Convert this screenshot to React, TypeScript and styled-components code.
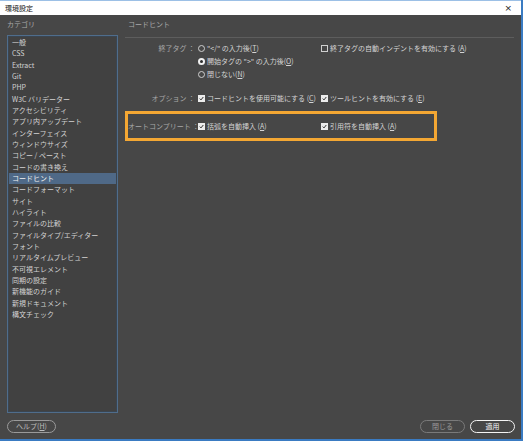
import React from "react";
import styled, {createGlobalStyle, css} from "styled-components";

const GlobalStyle = createGlobalStyle`
  html, body {
    margin: 0;
    padding: 0;
    background: #474747;
  }
  body {
    font-family: "Noto Sans CJK JP", "Noto Sans", sans-serif;
  }
`

const StyledWindow = styled.div`
  width: 523px;
  height: 441px;
  box-sizing: border-box;
  display: flex;
  flex-direction: column;
  background: #474747;
  border-right: 2px solid #3a7bc2;
  border-bottom: 2px solid #3a7bc2;
  overflow: hidden;
`

const StyledTitleBar = styled.div`
  height: 15px;
  flex-shrink: 0;
  box-sizing: border-box;
  background: #ffffff;
  border-top: 1px solid #9cc0e6;
  display: flex;
  align-items: center;
  justify-content: space-between;
  padding: 0 9px 0 5px;
  font-size: 7px;
  color: #111;
`

const StyledClose = styled.span`
  font-family: "DejaVu Sans", sans-serif;
  font-size: 9px;
  line-height: 1;
  color: #222;
`

const StyledBody = styled.div`
  flex: 1;
  display: grid;
  grid-template-columns: 111px 1fr;
  column-gap: 7px;
  padding: 3px 6px 0 7px;
`

const StyledSidebar = styled.div`
  display: flex;
  flex-direction: column;
`

const StyledSectionLabel = styled.div<{ $indent?: number }>`
  height: 12px;
  line-height: 12px;
  font-size: 7px;
  color: #a9a9a9;
  padding-left: ${props => props.$indent ?? 0}px;
`

const StyledList = styled.ul`
  list-style: none;
  margin: 5px 0 0;
  padding: 1px 1px;
  height: 378px;
  box-sizing: border-box;
  background: #414141;
  border: 1px solid #4f6d8c;
  box-shadow: inset 0 0 0 1px #3b4550;
`

const StyledListItem = styled.li<{ $selected?: boolean }>`
  height: 11.33px;
  line-height: 11.33px;
  padding-left: 3px;
  font-size: 7px;
  color: #d2d2d2;
  white-space: nowrap;
  ${props => props.$selected && css`
    background: #4f6987;
    color: #f2f2f2;
  `}
`

const StyledContent = styled.div`
  display: flex;
  flex-direction: column;
`

const StyledDivider = styled.div`
  height: 1px;
  margin-top: 7px;
  margin-right: 1px;
  background: #5d5d5d;
`

const StyledGroup = styled.div<{ $top: number }>`
  display: grid;
  grid-template-columns: 73px 123px 1fr;
  grid-auto-rows: 13px;
  align-items: center;
  margin-top: ${props => props.$top}px;
`

const StyledHighlight = styled.div`
  margin-top: 6.5px;
  width: 312px;
  height: 30px;
  box-sizing: border-box;
  border: 3px solid #f4a733;
  display: grid;
  grid-template-columns: 70px 123px 1fr;
  align-items: center;
`

const StyledLabel = styled.div`
  text-align: right;
  padding-right: 3px;
  font-size: 7px;
  color: #a8a8a8;
  white-space: nowrap;
`

const StyledOption = styled.label`
  display: flex;
  align-items: center;
  gap: 2px;
  font-size: 7px;
  color: #d4d4d4;
  white-space: nowrap;
`

const StyledRadio = styled.span<{ $checked?: boolean }>`
  width: 7px;
  height: 7px;
  box-sizing: border-box;
  border-radius: 50%;
  border: 1px solid #cfcfcf;
  ${props => props.$checked && css`
    border: 2px solid #f2f2f2;
    background: #2e2e2e;
  `}
`

const StyledBox = styled.span<{ $checked?: boolean }>`
  width: 7px;
  height: 7px;
  box-sizing: border-box;
  border: 1px solid #cfcfcf;
  display: flex;
  align-items: center;
  justify-content: center;
  ${props => props.$checked && css`
    background: #ececec;
    border-color: #ececec;
  `}
`

const StyledKey = styled.span`
  text-decoration: underline;
`

const StyledFooter = styled.div`
  height: 26px;
  flex-shrink: 0;
  display: flex;
  align-items: center;
  justify-content: space-between;
  padding: 0 6px 0 7px;
`

const StyledButtonRow = styled.div`
  display: flex;
  gap: 5px;
`

const StyledButton = styled.button<{ $width: number, $variant?: "default" | "muted" | "primary" }>`
  width: ${props => props.$width}px;
  height: 13px;
  box-sizing: border-box;
  padding: 0;
  border-radius: 7px;
  background: transparent;
  font-family: inherit;
  font-size: 7px;
  line-height: 1;
  border: 1px solid #9a9a9a;
  color: #bdbdbd;
  ${props => props.$variant === "muted" && css`
    border-color: #7a7a7a;
    color: #9a9a9a;
  `}
  ${props => props.$variant === "primary" && css`
    border: 1.5px solid #f4f4f4;
    color: #f4f4f4;
  `}
`

const Check = () => (
  <svg width="5" height="5" viewBox="0 0 10 10">
    <path d="M1.5 5.2 L4 7.8 L8.6 2" fill="none" stroke="#333" strokeWidth="2"/>
  </svg>
)

const Radio: React.FC<{ checked?: boolean, children: React.ReactNode }> = ({checked, children}) => (
  <StyledOption>
    <StyledRadio $checked={checked}/>
    <span>{children}</span>
  </StyledOption>
)

const Checkbox: React.FC<{ checked?: boolean, children: React.ReactNode }> = ({checked, children}) => (
  <StyledOption>
    <StyledBox $checked={checked}>{checked && <Check/>}</StyledBox>
    <span>{children}</span>
  </StyledOption>
)

const categories = [
  "一般", "CSS", "Extract", "Git", "PHP", "W3C バリデーター", "アクセシビリティ",
  "アプリ内アップデート", "インターフェイス", "ウィンドウサイズ", "コピー / ペースト",
  "コードの書き換え", "コードヒント", "コードフォーマット", "サイト", "ハイライト",
  "ファイルの比較", "ファイルタイプ/エディター", "フォント", "リアルタイムプレビュー",
  "不可視エレメント", "同期の設定", "新機能のガイド", "新規ドキュメント", "構文チェック",
]

const App: React.FC = () => {
  return (
    <>
      <GlobalStyle/>
      <StyledWindow>
        <StyledTitleBar>
          <span>環境設定</span>
          <StyledClose>×</StyledClose>
        </StyledTitleBar>
        <StyledBody>
          <StyledSidebar>
            <StyledSectionLabel>カテゴリ</StyledSectionLabel>
            <StyledList>
              {categories.map(name => (
                <StyledListItem key={name} $selected={name === "コードヒント"}>{name}</StyledListItem>
              ))}
            </StyledList>
          </StyledSidebar>
          <StyledContent>
            <StyledSectionLabel $indent={3}>コードヒント</StyledSectionLabel>
            <StyledDivider/>
            <StyledGroup $top={3.5}>
              <StyledLabel>終了タグ ：</StyledLabel>
              <Radio>"&lt;/" の入力後(<StyledKey>T</StyledKey>)</Radio>
              <Checkbox>終了タグの自動インデントを有効にする (<StyledKey>A</StyledKey>)</Checkbox>
              <span/>
              <Radio checked>開始タグの "&gt;" の入力後(<StyledKey>O</StyledKey>)</Radio>
              <span/>
              <span/>
              <Radio>閉じない(<StyledKey>N</StyledKey>)</Radio>
              <span/>
            </StyledGroup>
            <StyledGroup $top={11}>
              <StyledLabel>オプション ：</StyledLabel>
              <Checkbox checked>コードヒントを使用可能にする (<StyledKey>C</StyledKey>)</Checkbox>
              <Checkbox checked>ツールヒントを有効にする (<StyledKey>E</StyledKey>)</Checkbox>
            </StyledGroup>
            <StyledHighlight>
              <StyledLabel>オートコンプリート ：</StyledLabel>
              <Checkbox checked>括弧を自動挿入 (<StyledKey>A</StyledKey>)</Checkbox>
              <Checkbox checked>引用符を自動挿入 (<StyledKey>A</StyledKey>)</Checkbox>
            </StyledHighlight>
          </StyledContent>
        </StyledBody>
        <StyledFooter>
          <StyledButton $width={49}>ヘルプ(<StyledKey>H</StyledKey>)</StyledButton>
          <StyledButtonRow>
            <StyledButton $width={45} $variant="muted">閉じる</StyledButton>
            <StyledButton $width={45} $variant="primary">適用</StyledButton>
          </StyledButtonRow>
        </StyledFooter>
      </StyledWindow>
    </>
  );
};

export default App;
